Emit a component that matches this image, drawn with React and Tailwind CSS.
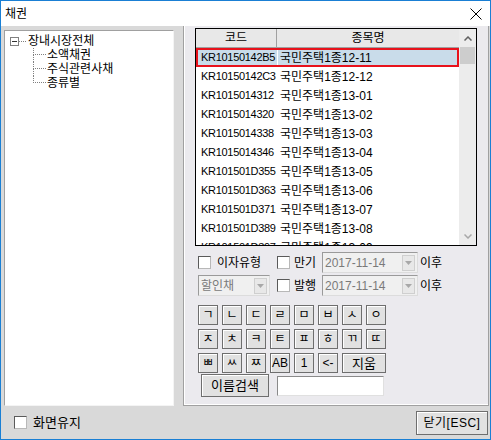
import React from "react";

const rows = [
  ["KR10150142B5", "국민주택1종12-11"],
  ["KR10150142C3", "국민주택1종12-12"],
  ["KR1015014312", "국민주택1종13-01"],
  ["KR1015014320", "국민주택1종13-02"],
  ["KR1015014338", "국민주택1종13-03"],
  ["KR1015014346", "국민주택1종13-04"],
  ["KR101501D355", "국민주택1종13-05"],
  ["KR101501D363", "국민주택1종13-06"],
  ["KR101501D371", "국민주택1종13-07"],
  ["KR101501D389", "국민주택1종13-08"],
  ["KR101501D397", "국민주택1종13-09"],
];

function Check() {
  return (
    <div className="w-[13px] h-[13px] bg-white border border-t-[#5a5a5a] border-l-[#5a5a5a] border-b-[#b8b8b8] border-r-[#b8b8b8] shrink-0" />
  );
}

function Arrow() {
  return (
    <div className="w-[13px] h-[16px] mr-[2px] bg-[#e8e8e8] border border-[#cfcfcf] flex items-center justify-center shrink-0">
      <svg width="7" height="4" viewBox="0 0 7 4">
        <path d="M0 0 L7 0 L3.5 4 Z" fill="#a8a8a8" />
      </svg>
    </div>
  );
}

function Combo({ text, w }) {
  return (
    <div className={`${w} h-[21px] bg-[#f0f0f0] border border-t-[#9a9a9a] border-l-[#9a9a9a] border-b-[#dcdcdc] border-r-[#dcdcdc] flex items-center justify-between shrink-0`}>
      <span className="pl-[2px] text-[#7a7a7a] leading-none">{text}</span>
      <Arrow />
    </div>
  );
}

function Key({ children, w = "w-[20px]" }) {
  return (
    <div className={`${w} h-[20px] border border-[#6e6e6e] bg-[#e1e1e1] shadow-[inset_1px_1px_0_#ffffff] flex items-center justify-center text-[12px] leading-none`}>
      {children}
    </div>
  );
}

function Child({ label, last }) {
  return (
    <div className="flex h-[14px]">
      <div className="w-[13px] flex flex-col shrink-0">
        <div className="h-[7px] border-l border-b border-dotted border-[#808080]" />
        <div className={`flex-1 ${last ? "" : "border-l border-dotted border-[#808080]"}`} />
      </div>
      <span className="ml-[1px] leading-[14px] text-[12px]">{label}</span>
    </div>
  );
}

export default function App() {
  const keys1 = ["ㄱ", "ㄴ", "ㄷ", "ㄹ", "ㅁ", "ㅂ", "ㅅ", "ㅇ"];
  const keys2 = ["ㅈ", "ㅊ", "ㅋ", "ㅌ", "ㅍ", "ㅎ", "ㄲ", "ㄸ"];
  const keys3 = ["ㅃ", "ㅆ", "ㅉ", "AB", "1", "<-"];
  return (
    <div className="w-[491px] h-[440px] border border-[#1a7fd4] flex flex-col bg-[#d9d9d9] font-['Liberation_Sans','Noto_Sans_CJK_KR',sans-serif] text-[12px] text-black overflow-hidden">
      <div className="h-[25px] bg-white flex items-center justify-between pl-[4px] pr-[8px] shrink-0">
        <span className="leading-none">채권</span>
        <svg width="12" height="12" viewBox="0 0 12 12">
          <path d="M0.5 0.5 L11.5 11.5 M11.5 0.5 L0.5 11.5" stroke="#000" strokeWidth="1" />
        </svg>
      </div>
      <div className="flex-1 flex flex-col">
        <div className="flex h-[380px] shrink-0">
          <div className="mt-[4px] ml-[3px] w-[170px] h-[376px] bg-white border border-t-[#a0a0a0] border-l-[#a0a0a0] border-b-[#f4f4f4] border-r-[#f4f4f4] shrink-0">
            <div className="mt-[3px] pl-[5px] flex items-center h-[14px]">
              <div className="w-[9px] h-[9px] border border-[#808080] flex items-center justify-center shrink-0">
                <div className="w-[5px] h-[1px] bg-[#333]" />
              </div>
              <div className="w-[7px] border-t border-dotted border-[#808080]" />
              <span className="ml-[2px] leading-[14px]">장내시장전체</span>
            </div>
            <div className="ml-[28px]">
              <Child label="소액채권" />
              <Child label="주식관련사채" />
              <Child label="종류별" last />
            </div>
          </div>
          <div className="ml-[9px] w-[306px] h-[380px] bg-[#ebeaee] border-l border-b border-r border-[#a0a0a0] shadow-[inset_1px_-1px_0_#ffffff] pl-[11px] pt-[2px] flex flex-col shrink-0">
            <div className="w-[282px] h-[218px] border border-black bg-white flex overflow-hidden shrink-0">
              <div className="w-[263px] flex flex-col">
                <div className="h-[19px] flex bg-[#e8e8e8] border-b border-[#a0a0a0] shrink-0">
                  <div className="w-[81px] border-r border-[#a0a0a0] flex items-center justify-center">코드</div>
                  <div className="flex-1 flex items-center justify-center">종목명</div>
                </div>
                {rows.map(([c, n], i) => (
                  <div
                    key={c}
                    className={`h-[19px] flex items-center shrink-0 ${i === 0 ? "bg-[#c9dcea] border-2 border-[#e8121c]" : ""}`}
                  >
                    <div className={`${i === 0 ? "w-[79px] pl-[3px]" : "w-[81px] pl-[5px]"} text-[11px] tracking-[-0.3px] leading-none shrink-0`}>{c}</div>
                    <div className={`${i === 0 ? "pl-[2px] border-l border-white self-stretch flex items-center" : "pl-[3px]"} leading-none`}>{n}</div>
                  </div>
                ))}
              </div>
              <div className="w-[17px] bg-[#ececec] flex flex-col justify-between">
                <div>
                  <div className="h-[18px] flex items-center justify-center">
                    <svg width="8" height="5" viewBox="0 0 8 5">
                      <path d="M0.5 4.5 L4 1 L7.5 4.5" stroke="#606060" strokeWidth="1.5" fill="none" />
                    </svg>
                  </div>
                  <div className="h-[17px] mx-[1px] bg-[#cdcdcd]" />
                </div>
                <div className="h-[18px] flex items-center justify-center">
                  <svg width="8" height="5" viewBox="0 0 8 5">
                    <path d="M0.5 0.5 L4 4 L7.5 0.5" stroke="#a8a8a8" strokeWidth="1.5" fill="none" />
                  </svg>
                </div>
              </div>
            </div>
            <div className="mt-[6px] ml-[3px] h-[21px] flex items-center">
              <div className="w-[79px] flex items-center shrink-0">
                <Check />
                <span className="ml-[6px] leading-none">이자유형</span>
              </div>
              <div className="w-[17px] shrink-0"><Check /></div>
              <span className="w-[28px] leading-none shrink-0">만기</span>
              <Combo text="2017-11-14" w="w-[96px]" />
              <span className="ml-[2px] leading-none">이후</span>
            </div>
            <div className="mt-[2px] ml-[3px] h-[21px] flex items-center">
              <div className="w-[79px] flex items-center shrink-0">
                <Combo text="할인채" w="w-[72px]" />
              </div>
              <div className="w-[17px] shrink-0"><Check /></div>
              <span className="w-[28px] leading-none shrink-0">발행</span>
              <Combo text="2017-11-14" w="w-[96px]" />
              <span className="ml-[2px] leading-none">이후</span>
            </div>
            <div className="mt-[9px] ml-[3px] flex flex-col gap-[4px]">
              <div className="flex gap-[4px]">{keys1.map((k) => <Key key={k}>{k}</Key>)}</div>
              <div className="flex gap-[4px]">{keys2.map((k) => <Key key={k}>{k}</Key>)}</div>
              <div className="flex gap-[4px]">
                {keys3.map((k) => <Key key={k}>{k}</Key>)}
                <Key w="w-[44px]"><span className="text-[13px]">지움</span></Key>
              </div>
            </div>
            <div className="mt-[1px] ml-[6px] flex items-center">
              <div className="w-[68px] h-[23px] border border-[#6e6e6e] bg-[#e1e1e1] shadow-[inset_1px_1px_0_#ffffff] flex items-center justify-center leading-none text-[13px]">이름검색</div>
              <div className="ml-[8px] w-[107px] h-[20px] bg-white border border-t-[#8a8a8a] border-l-[#8a8a8a] border-b-[#e0e0e0] border-r-[#e0e0e0]" />
            </div>
          </div>
        </div>
        <div className="flex-1 flex items-center justify-between pl-[13px] pr-[2px]">
          <div className="flex items-center">
            <Check />
            <span className="ml-[6px] leading-none text-[13px]">화면유지</span>
          </div>
          <div className="w-[72px] h-[24px] border border-[#6e6e6e] bg-[#e1e1e1] shadow-[inset_1px_1px_0_#ffffff] flex items-center justify-center leading-none tracking-[0.5px]">닫기[ESC]</div>
        </div>
      </div>
    </div>
  );
}
